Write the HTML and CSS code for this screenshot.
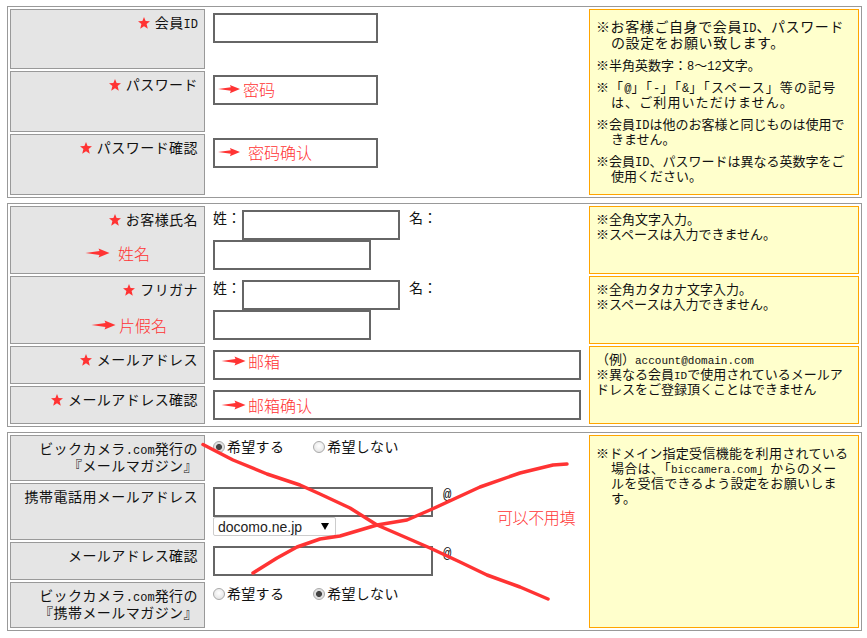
FILE: index.html
```html
<!DOCTYPE html>
<html lang="ja">
<head>
<meta charset="utf-8">
<title>会員登録</title>
<link rel="stylesheet" href="styles.css">
</head>
<body>
<svg class="defs" aria-hidden="true">
  <symbol id="star" viewBox="0 0 12 12"><polygon points="6,0 7.6,4 12,4.3 8.6,7 9.8,11.8 6,9.2 2.2,11.8 3.4,7 0,4.3 4.4,4"/></symbol>
  <symbol id="arrow" viewBox="0 0 24 10"><polygon points="0,5 14,3 13,0.5 24,5 13,9.5 14,7"/></symbol>
</svg>
<main class="page">
  <section class="group g1">
    <div class="label"><svg class="star"><use href="#star"/></svg>会員<span class="en">ID</span></div>
    <div class="cell"><input class="box w165" type="text"></div>
    <div class="note span3">
      <p class="lead">※お客様ご自身で会員<span class="en">ID</span>、パスワード<br>の設定をお願い致します。</p>
      <p>※半角英数字：<span class="en">8</span>～<span class="en">12</span>文字。</p>
      <p class="roomy">※「<span class="en">@</span>」「<span class="en">-</span>」「<span class="en">&amp;</span>」「スペース」等の記号<br>は、ご利用いただけません。</p>
      <p>※会員<span class="en">ID</span>は他のお客様と同じものは使用で<br>きません。</p>
      <p>※会員<span class="en">ID</span>、パスワードは異なる英数字をご<br>使用ください。</p>
    </div>
    <div class="label"><svg class="star"><use href="#star"/></svg>パスワード</div>
    <div class="cell"><div class="field w165"><input class="box fill" type="text"><div class="over"><svg class="arrow"><use href="#arrow"/></svg><span class="mark">密码</span></div></div></div>
    <div class="label"><svg class="star"><use href="#star"/></svg>パスワード確認</div>
    <div class="cell"><div class="field w165"><input class="box fill" type="text"><div class="over wide"><svg class="arrow"><use href="#arrow"/></svg><span class="mark">密码确认</span></div></div></div>
  </section>

  <section class="group g2">
    <div class="label"><svg class="star"><use href="#star"/></svg>お客様氏名
      <div class="hint hint-name"><svg class="arrow arrow-lg"><use href="#arrow"/></svg><span class="mark">姓名</span></div>
    </div>
    <div class="cell name"><span class="cap">姓：</span><input class="box w158" type="text"><span class="cap cap-next">名：</span><input class="box w158" type="text"></div>
    <div class="note plain">※全角文字入力。<br>※スペースは入力できません。</div>
    <div class="label"><svg class="star"><use href="#star"/></svg>フリガナ
      <div class="hint hint-kana"><svg class="arrow arrow-lg"><use href="#arrow"/></svg><span class="mark">片假名</span></div>
    </div>
    <div class="cell name"><span class="cap">姓：</span><input class="box w158" type="text"><span class="cap cap-next">名：</span><input class="box w158" type="text"></div>
    <div class="note plain">※全角カタカナ文字入力。<br>※スペースは入力できません。</div>
    <div class="label"><svg class="star"><use href="#star"/></svg>メールアドレス</div>
    <div class="cell"><div class="field w368"><input class="box fill" type="text"><div class="over mail high"><svg class="arrow arrow-lg"><use href="#arrow"/></svg><span class="mark">邮箱</span></div></div></div>
    <div class="note plain span2">（例）<span class="en en-sm">account@domain.com</span><br>※異なる会員<span class="en en-sm">ID</span>で使用されているメールア<br>ドレスをご登録頂くことはできません</div>
    <div class="label"><svg class="star"><use href="#star"/></svg>メールアドレス確認</div>
    <div class="cell"><div class="field w368"><input class="box fill" type="text"><div class="over mail"><svg class="arrow arrow-lg"><use href="#arrow"/></svg><span class="mark">邮箱确认</span></div></div></div>
  </section>

  <section class="group g3">
    <div class="label">ビックカメラ<span class="en">.com</span>発行の<br>『メールマガジン』</div>
    <div class="cell choice">
      <label class="opt"><input class="radio" type="radio" name="mag" checked>希望する</label>
      <label class="opt"><input class="radio" type="radio" name="mag">希望しない</label>
    </div>
    <div class="note plain span4 hang">※ドメイン指定受信機能を利用されている<br>場合は、「<span class="en en-sm">biccamera.com</span>」からのメー<br>ルを受信できるよう設定をお願いしま<br>す。</div>
    <div class="label">携帯電話用メールアドレス</div>
    <div class="cell">
      <div class="mobile"><input class="box w220" type="text"><span class="at en">@</span></div>
      <div class="pick"><select class="domain"><option>docomo.ne.jp</option></select></div>
    </div>
    <div class="label">メールアドレス確認</div>
    <div class="cell"><div class="mobile"><input class="box w220" type="text"><span class="at en">@</span></div></div>
    <div class="label">ビックカメラ<span class="en">.com</span>発行の<br>『携帯メールマガジン』</div>
    <div class="cell choice">
      <label class="opt"><input class="radio" type="radio" name="mob">希望する</label>
      <label class="opt"><input class="radio" type="radio" name="mob" checked>希望しない</label>
    </div>
  </section>

  <span class="optional mark">可以不用填</span>
  <svg class="cross" viewBox="0 0 867 638" aria-hidden="true">
    <path d="M203 444.5L233 460L267 474L300 485L320 494L350 508L377 525L407 538L430 548L460 562L487 575L520 587L548 599"/>
    <path d="M253 573L277 558L297 547L320 539L340 536L377 525L407 520L430 510L480 487L520 473L553 465L567 464"/>
  </svg>
</main>
</body>
</html>
```
FILE: styles.css
```css
* { box-sizing: border-box; }
html, body { margin: 0; background: #fff; }
body {
  font-family: "Noto Sans CJK JP", sans-serif;
  font-size: 14px;
  line-height: 17px;
  color: #111;
}
.defs { position: absolute; width: 0; height: 0; }
.page {
  position: relative;
  width: 867px;
  height: 638px;
  padding: 6px 5px 0 7px;
  display: flex;
  flex-direction: column;
  gap: 5px;
}
.group {
  display: grid;
  grid-template-columns: 195px 380px 270px;
  gap: 2px;
  padding: 2px;
  border: 1px solid #999;
}
.g1 { grid-template-rows: 60px 61px 61px; }
.g2 { grid-template-rows: 68px 68px 38px 38px; }
.g3 { grid-template-rows: 46px 57px 38px 46px; }
.label {
  background: #e5e5e5;
  border: 1px solid #999;
  padding: 4px 6px 0 0;
  text-align: right;
  letter-spacing: .45px;
}
.cell { padding: 4px 6px 0; }
.note {
  background: #ffc;
  border: 1px solid #ffa500;
  padding: 7px 6px 0;
  font-size: 13px;
  line-height: 15px;
}
.note p { margin: 0 0 7px; padding-left: 15px; text-indent: -15px; }
.note .lead { font-size: 14px; line-height: 16px; letter-spacing: .6px; margin: 1px 0 7px; }
.note .roomy { letter-spacing: 1.1px; }
.plain { padding-top: 4px; }
.hang { padding: 9px 6px 0 21px; text-indent: -15px; letter-spacing: .3px; }
.span2 { grid-row: span 2; }
.span3 { grid-row: span 3; }
.span4 { grid-row: span 4; }
.en { font-family: "Liberation Mono", monospace; font-size: 12px; line-height: 0; letter-spacing: 0; }
.en-sm { font-size: 11px; }
.star {
  width: 12px;
  height: 12px;
  margin-right: 5px;
  fill: #f33;
  vertical-align: -1px;
}
.arrow { width: 22px; height: 10px; fill: #f33; flex: none; }
.arrow-lg { width: 25px; }
.mark {
  font-family: "Noto Sans CJK SC", sans-serif;
  font-weight: 300;
  font-size: 16px;
  line-height: 20px;
  color: #f33;
  letter-spacing: 0;
}
.box {
  display: block;
  height: 30px;
  margin: 0;
  padding: 0 4px;
  border: 2px solid #666;
  border-radius: 0;
  background: #fff;
  outline: 0;
}
.w158 { width: 158px; }
.w165 { width: 165px; }
.w220 { width: 220px; }
.w368 { width: 368px; }
.fill { width: 100%; }
.field { position: relative; }
.over {
  position: absolute;
  inset: 0;
  display: flex;
  align-items: center;
  gap: 3px;
  padding: 0 0 2px 5px;
}
.wide { gap: 8px; }
.mail { padding: 0 0 0 8px; gap: 2px; }
.high { padding-bottom: 8px; }
.hint {
  display: flex;
  align-items: center;
  gap: 8px;
  justify-content: flex-end;
  font-size: 16px;
}
.hint-name { margin: 15px 48px 0 0; }
.hint-kana { margin: 17px 31px 0 0; gap: 3px; }
.name { display: flex; flex-wrap: wrap; align-items: flex-start; align-content: flex-start; }
.cap { width: 29px; line-height: 17px; height: 30px; margin-top: -1px; }
.cap-next { margin-left: 9px; width: 28px; }
.choice { display: flex; gap: 29px; padding-top: 3px; }
.opt { display: flex; align-items: center; height: 17px; letter-spacing: .3px; }
.radio {
  appearance: none;
  width: 12px;
  height: 12px;
  margin: 0 2px 0 0;
  border: 1px solid #a9a9a9;
  border-radius: 50%;
  background: radial-gradient(circle at 50% 40%, #fff, #ddd);
}
.radio:checked {
  background: radial-gradient(circle, #444 0 2.6px, #ddd 3.4px, #eee);
}
.mobile { display: flex; align-items: flex-start; }
.at { margin-left: 10px; font-size: 14px; line-height: 17px; }
.pick { position: relative; width: 123px; height: 19px; }
.pick::after {
  content: "";
  position: absolute;
  top: 6px;
  right: 7px;
  border: 4px solid transparent;
  border-top: 7px solid #000;
  border-bottom: 0;
}
.domain {
  appearance: none;
  display: block;
  width: 100%;
  height: 19px;
  margin: 0;
  padding: 0 0 0 4px;
  border: 1px solid #ccc;
  border-radius: 2px;
  background: #fff;
  font-family: "Liberation Sans", sans-serif;
  font-size: 14px;
  color: #222;
}
.optional { position: absolute; left: 497px; top: 507px; letter-spacing: -.4px; }
.cross {
  position: absolute;
  inset: 0;
  width: 867px;
  height: 638px;
  pointer-events: none;
  fill: none;
  stroke: #f33;
  stroke-width: 3.5;
  stroke-linecap: round;
  stroke-linejoin: round;
}
```
